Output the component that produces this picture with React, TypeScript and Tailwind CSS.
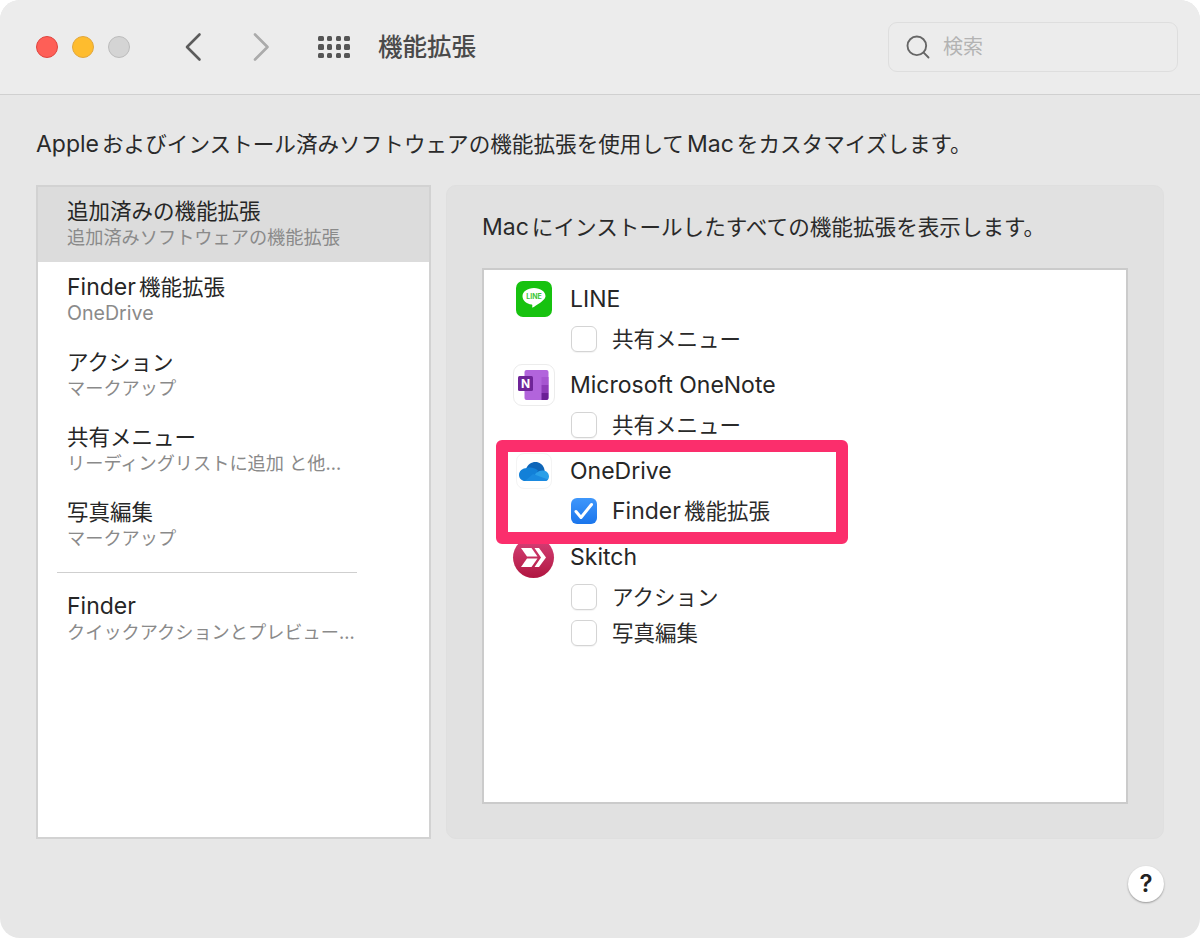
import type { ReactNode } from 'react'
import { Search } from 'lucide-react'

const FONT = "font-['Inter','Noto_Sans_CJK_JP',sans-serif]"

// latin words run a bit larger than the kana next to them
function Lat({ children, gap }: { children: ReactNode; gap?: boolean }) {
  return <span className={`text-[23px] ${gap ? 'mr-[3px]' : ''}`}>{children}</span>
}

const sidebarItems = [
  { key: 'added', title: '追加済みの機能拡張', sub: '追加済みソフトウェアの機能拡張', selected: true },
  { key: 'finder', title: <><Lat gap>Finder</Lat>機能拡張</>, sub: <span className="text-[19.6px]">OneDrive</span> },
  { key: 'action', title: 'アクション', sub: 'マークアップ' },
  { key: 'share', title: '共有メニュー', sub: 'リーディングリストに追加 と他…' },
  { key: 'photo', title: '写真編集', sub: 'マークアップ' },
]

function SidebarRow({ title, sub, selected }: { title: ReactNode; sub: ReactNode; selected?: boolean }) {
  return (
    <div className={`h-[75px] pl-[29px] ${selected ? 'bg-[#dcdcdc] pt-[9px]' : 'pt-[10px]'}`}>
      <div className="text-[21.5px] leading-[30px] text-[#262626]">{title}</div>
      <div className="text-[18.2px] leading-[23px] text-[#8a8a8a]">{sub}</div>
    </div>
  )
}

function Check({ label, checked }: { label: ReactNode; checked?: boolean }) {
  return (
    <div className="flex h-[36px] items-center pl-[87px]">
      {checked ? (
        <div className="h-[26px] w-[26px] rounded-[6px] bg-gradient-to-b from-[#3f97fb] to-[#1a75ec]">
          <svg width="26" height="26" viewBox="0 0 26 26" fill="none">
            <path d="M5 13.500 L10 19.500 L20.500 6.500" stroke="white" strokeWidth="3" strokeLinecap="round" strokeLinejoin="round" />
          </svg>
        </div>
      ) : (
        <div className="h-[26px] w-[26px] rounded-[6px] border border-[#d4d4d4] bg-white shadow-[0_1px_1px_rgba(0,0,0,0.05)]" />
      )}
      <span className="ml-[15px] text-[21.5px] text-[#2a2a2a]">{label}</span>
    </div>
  )
}

function LineIcon() {
  return (
    <div className="flex h-[36px] w-[36px] items-center justify-center rounded-[7px] bg-[#17c20f]">
      <svg width="28" height="28" viewBox="0 0 28 28">
        <path d="M14 3C7.500 3 2.500 6.600 2.500 11.300c0 4.200 3.900 7.600 9.200 8.300.8.200.7 1 .5 2.300-.1.600.4.800 1 .4 2.400-1.300 8.600-5.300 10.900-8 1-1.100 1.400-2.300 1.400-3C25.500 6.600 20.500 3 14 3z" fill="white" />
        <text x="14" y="14" textAnchor="middle" fontSize="7" fontWeight="700" fill="#3cc636" fontFamily="Inter, sans-serif">LINE</text>
      </svg>
    </div>
  )
}

function OneNoteIcon() {
  return (
    <div className="flex h-[42px] w-[42px] items-center justify-center rounded-[9px] border border-[#ececec] bg-white">
      <svg width="31" height="30" viewBox="0 0 31 30">
        <rect x="6.500" y="0" width="24" height="30" rx="2" fill="#b264dc" />
        <rect x="23.500" y="7" width="7" height="8" fill="#a655d0" />
        <rect x="23.500" y="15" width="7" height="8" fill="#8e3bb8" />
        <path d="M23.500 23h7v5a2 2 0 0 1-2 2h-5z" fill="#6c1f96" />
        <rect x="0" y="6" width="15" height="15" rx="1.500" fill="#6f2498" />
        <text x="7.500" y="18" textAnchor="middle" fontSize="12" fontWeight="700" fill="white" fontFamily="Inter, sans-serif">N</text>
      </svg>
    </div>
  )
}

function OneDriveIcon() {
  return (
    <div className="flex h-[36px] w-[36px] items-center justify-center rounded-[8px] border border-[#f4f4f4] bg-white">
      <svg width="30" height="19" viewBox="0 0 30 19">
        <path d="M7 7 C8.500 2.500 12.500 0 16.500 0 C20.500 0 23.500 2.500 25 6 L26 10 L13 14z" fill="#0f66b8" />
        <path d="M8 6 C3.500 6 0 9 0 13 C0 16.500 3 19 6 19 L14 19 L19 8.500 C15 5.500 11.500 5 8 6z" fill="#1280d8" />
        <path d="M12 19 L26 19 C28.500 19 30 17 30 14.500 C30 11.500 28 9 25 8.700 C22 8.200 20 9 17 11z" fill="#2a9fe8" />
        <path d="M6 19 L26 19 C27.500 19 28.500 18.400 29 17.500 L14 12z" fill="#1a8ae0" />
      </svg>
    </div>
  )
}

function SkitchIcon() {
  return (
    <div className="flex h-[41px] w-[41px] items-center justify-center rounded-full bg-gradient-to-b from-[#d8407a] to-[#b01440]">
      <svg width="25" height="19" viewBox="0 0 25 19" fill="white">
        <path d="M0 0 L10.500 0 L16.500 8.500 L6 8.500z" />
        <path d="M6 10.500 L16.500 10.500 L10.500 19 L0 19z" />
        <path d="M13.500 0 L18 0 L25 9.500 L18 19 L13.500 19 L20 9.500z" />
      </svg>
    </div>
  )
}

function Group({ icon, name, children }: { icon: ReactNode; name: string; children: ReactNode }) {
  return (
    <div className="mb-[10px]">
      <div className="mb-[4px] flex h-[36px] items-center">
        <div className="flex w-[86px] justify-center pl-[13px]">{icon}</div>
        <span className="text-[23px] text-[#262626]">{name}</span>
      </div>
      {children}
    </div>
  )
}

export default function App() {
  return (
    <div className={`h-[938px] w-[1200px] overflow-hidden bg-white ${FONT}`}>
      <div className="relative flex h-full flex-col overflow-hidden rounded-[20px] bg-[#e7e7e7]">
        {/* title bar */}
        <header className="flex h-[95px] shrink-0 items-center border-b border-[#d0d0d0] bg-[#ececec] pl-[36px] pr-[22px]">
          <div className="flex gap-[14px]">
            <div className="h-[22px] w-[22px] rounded-full border border-[#e0443e] bg-[#fe5f57]" />
            <div className="h-[22px] w-[22px] rounded-full border border-[#e1a73e] bg-[#febc2e]" />
            <div className="h-[22px] w-[22px] rounded-full border border-[#bcbcbc] bg-[#d4d4d4]" />
          </div>
          <svg className="ml-[54px]" width="18" height="30" viewBox="0 0 18 30" fill="none">
            <path d="M15.500 2.500 L3 15 L15.500 27.500" stroke="#5c5c5c" strokeWidth="2.600" strokeLinecap="round" strokeLinejoin="round" />
          </svg>
          <svg className="ml-[50px]" width="18" height="30" viewBox="0 0 18 30" fill="none">
            <path d="M3 2.500 L15.500 15 L3 27.500" stroke="#ababab" strokeWidth="2.600" strokeLinecap="round" strokeLinejoin="round" />
          </svg>
          <div className="ml-[48px] grid grid-cols-4 gap-x-[3.3px] gap-y-[3px]">
            {Array.from({ length: 12 }).map((_, i) => (
              <div key={i} className="h-[5.5px] w-[5.5px] rounded-[1.5px] bg-[#555555]" />
            ))}
          </div>
          <h1 className="ml-[28px] text-[24.5px] font-medium text-[#4a4a4a]">機能拡張</h1>
          <div className="ml-auto flex h-[50px] w-[290px] items-center rounded-[9px] border border-[#dedede] pl-[15px]">
            <Search className="h-[28px] w-[28px] text-[#666666]" strokeWidth={1.6} />
            <span className="ml-[11px] text-[20px] text-[#b3b3b3]">検索</span>
          </div>
        </header>

        {/* content */}
        <main className="flex flex-1 flex-col px-[36px]">
          <p className="mt-[34px] h-[56px] text-[21.6px] leading-[30px] text-[#2a2a2a]">
            <Lat gap>Apple</Lat>およびインストール済みソフトウェアの機能拡張を使用して
            <span className="mx-[3px]"><Lat>Mac</Lat></span>をカスタマイズします。
          </p>
          <div className="flex gap-[15px]">
            <aside className="h-[654px] w-[395px] border-2 border-[#d2d2d2] bg-white">
              {sidebarItems.map(({ key, ...item }) => (
                <SidebarRow key={key} {...item} />
              ))}
              <div className="ml-[19px] mt-[-1px] h-[1px] w-[300px] translate-y-[11px] bg-[#cfcfcf]" />
              <div className="mt-[19px]">
                <SidebarRow title={<Lat>Finder</Lat>} sub="クイックアクションとプレビュー…" />
              </div>
            </aside>
            <section className="h-[654px] w-[718px] rounded-[10px] border border-[#dfdfdf] bg-[#e1e1e1] pl-[35px] pt-[26px]">
              <p className="h-[56px] text-[21.6px] leading-[30px] text-[#2a2a2a]">
                <Lat gap>Mac</Lat>にインストールしたすべての機能拡張を表示します。
              </p>
              <div className="h-[536px] w-[646px] border-2 border-[#cbcbcb] bg-white pt-[11px]">
                <Group icon={<LineIcon />} name="LINE">
                  <Check label="共有メニュー" />
                </Group>
                <Group icon={<OneNoteIcon />} name="Microsoft OneNote">
                  <Check label="共有メニュー" />
                </Group>
                <Group icon={<OneDriveIcon />} name="OneDrive">
                  <Check label={<><Lat gap>Finder</Lat>機能拡張</>} checked />
                </Group>
                <Group icon={<SkitchIcon />} name="Skitch">
                  <Check label="アクション" />
                  <Check label="写真編集" />
                </Group>
              </div>
            </section>
          </div>
        </main>

        {/* pink annotation */}
        <div className="absolute left-[496px] top-[440px] h-[104px] w-[352px] rounded-[6px] border-[12px] border-[#fb2e6c]" />

        {/* help */}
        <div className="absolute left-[1128px] top-[866px] flex h-[36px] w-[36px] items-center justify-center rounded-full bg-white text-[24px] font-semibold text-[#222222] shadow-[0_1px_2px_rgba(0,0,0,0.35)]">
          ?
        </div>
      </div>
    </div>
  )
}
